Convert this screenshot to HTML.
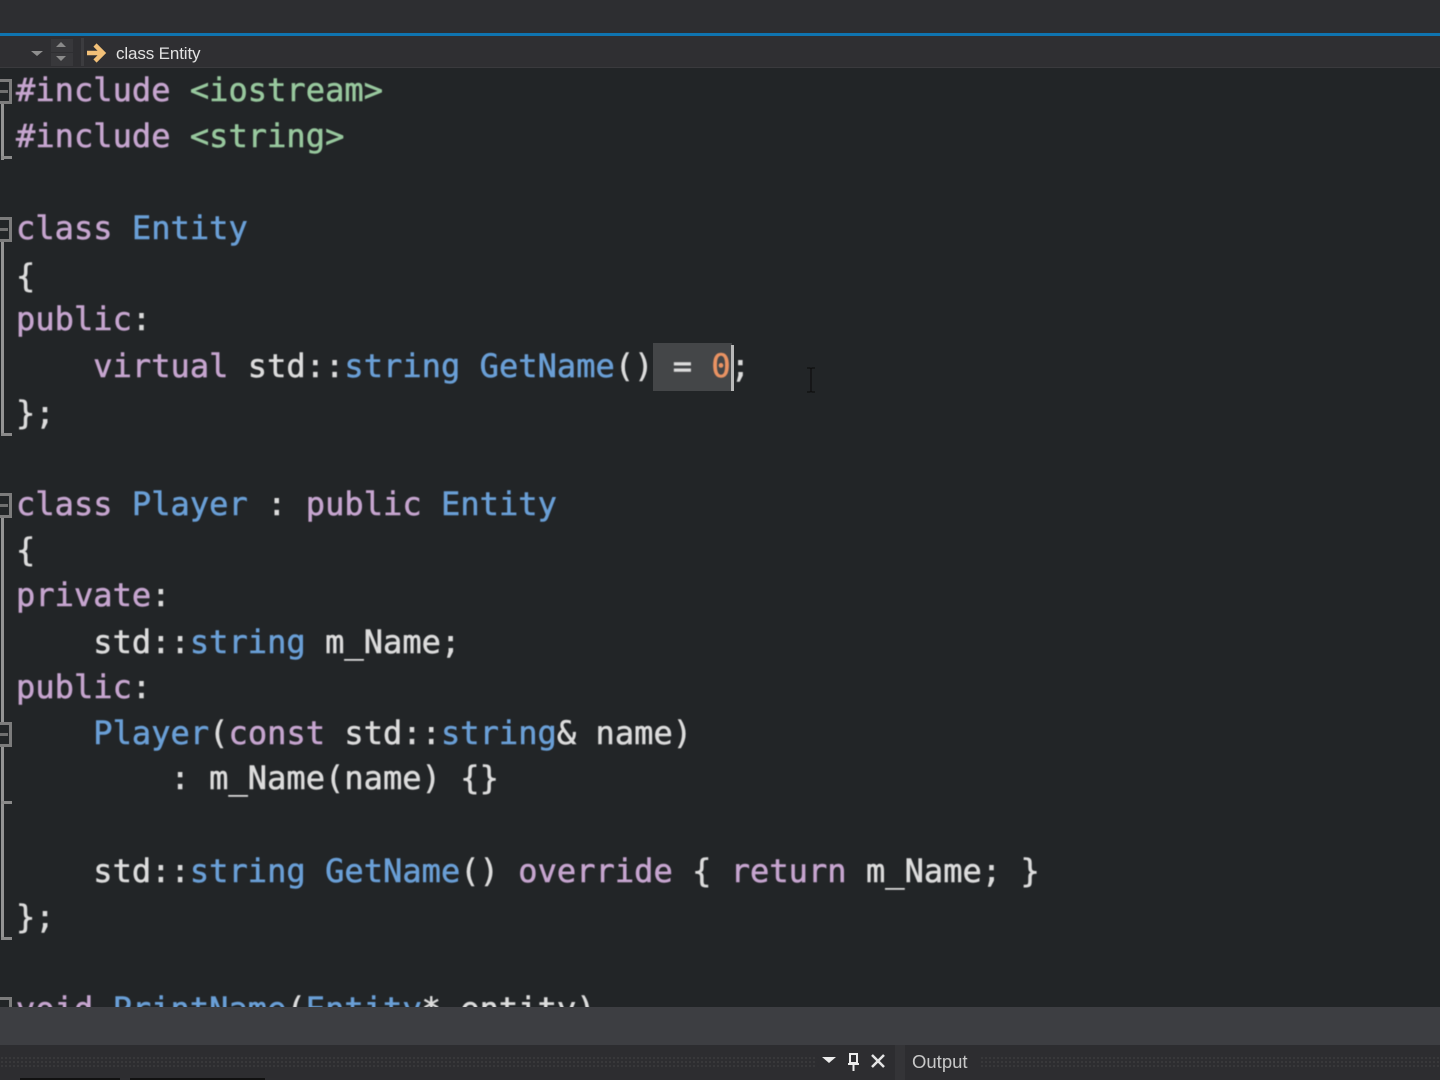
<!DOCTYPE html>
<html>
<head>
<meta charset="utf-8">
<style>
html,body{margin:0;padding:0;background:#222527;}
body{width:1440px;height:1080px;position:relative;overflow:hidden;}
.a{position:absolute;}
.code{position:absolute;left:0;top:68px;width:1440px;height:939px;overflow:hidden;background:#222527;}
.l{position:absolute;left:16px;white-space:pre;font-family:"DejaVu Sans Mono",monospace;font-size:32px;line-height:46px;height:46px;letter-spacing:.05px;color:#dcdcdc;-webkit-text-stroke:.55px currentColor;filter:blur(.45px);}
.k{color:#c6a5cf;}
.t{color:#6a9fd6;}
.g{color:#98c89e;}
.n{color:#ea9363;}
.box{position:absolute;left:-13px;width:25px;height:25px;border:3px solid #7c7c7c;box-sizing:border-box;background:#222527;}
.box:after{content:"";position:absolute;left:9px;top:8px;width:9px;height:3px;background:#6f6f6f;}
.v{position:absolute;left:1px;width:3px;background:#949494;}
.h{position:absolute;left:1px;width:11px;height:3px;background:#8a8a8a;}
</style>
</head>
<body>
<div class="a" style="left:0;top:0;width:1440px;height:33px;background:#2d2e31;"></div>
<div class="a" style="left:0;top:33px;width:1440px;height:3px;background:#0f74b0;"></div>
<div class="a" style="left:0;top:36px;width:1440px;height:32px;background:#2f2f32;border-bottom:1px solid #3a3a3d;box-sizing:border-box;"></div>
<div class="a" style="left:51px;top:39px;width:22px;height:13px;background:#38383b;"></div>
<div class="a" style="left:51px;top:53px;width:22px;height:13px;background:#38383b;"></div>
<div class="a" style="left:81px;top:38px;width:3px;height:28px;background:#3c3c3f;"></div>
<svg class="a" style="left:0;top:36px;" width="120" height="32">
<path d="M31 15h12l-6 5z" fill="#8f8f8f"/>
<path d="M56 11h10l-5-5z" fill="#8a8a8a"/>
<path d="M56 20h10l-5 5z" fill="#8a8a8a"/>
<path d="M87 17h14M95 9l8 8-8 8" fill="none" stroke="#f2c078" stroke-width="4.500"/>
</svg>
<div class="a" style="left:116px;top:43px;font:17px/22px 'Liberation Sans',sans-serif;color:#e2e2e2;white-space:pre;letter-spacing:-.13px;filter:blur(.25px);">class Entity</div>

<div class="code">
<div class="v" style="top:34px;height:58px;"></div><div class="h" style="top:88px;"></div>
<div class="v" style="top:172px;height:196px;"></div><div class="h" style="top:365px;"></div>
<div class="v" style="top:448px;height:424px;"></div><div class="h" style="top:869px;"></div>
<div class="h" style="top:733px;"></div>
<div class="box" style="top:11px;"></div>
<div class="box" style="top:149px;"></div>
<div class="box" style="top:425px;"></div>
<div class="box" style="top:654px;"></div>
<div class="box" style="top:929px;"></div>
<div class="a" style="left:653px;top:275px;width:79px;height:48px;background:#444648;"></div>
<div class="a" style="left:731px;top:277px;width:3px;height:46px;background:#b8b8b8;z-index:3;"></div>

<div class="l" style="top:-1px;"><span class="k">#include</span> <span class="g">&lt;iostream&gt;</span></div>
<div class="l" style="top:45px;"><span class="k">#include</span> <span class="g">&lt;string&gt;</span></div>
<div class="l" style="top:137px;"><span class="k">class</span> <span class="t">Entity</span></div>
<div class="l" style="top:185px;">{</div>
<div class="l" style="top:228px;"><span class="k">public</span>:</div>
<div class="l" style="top:275px;">    <span class="k">virtual</span> std::<span class="t">string</span> <span class="t">GetName</span>() = <span class="n">0</span>;</div>
<div class="l" style="top:322px;">};</div>
<div class="l" style="top:413px;"><span class="k">class</span> <span class="t">Player</span> : <span class="k">public</span> <span class="t">Entity</span></div>
<div class="l" style="top:459px;">{</div>
<div class="l" style="top:504px;"><span class="k">private</span>:</div>
<div class="l" style="top:551px;">    std::<span class="t">string</span> m_Name;</div>
<div class="l" style="top:596px;"><span class="k">public</span>:</div>
<div class="l" style="top:642px;">    <span class="t">Player</span>(<span class="k">const</span> std::<span class="t">string</span>&amp; name)</div>
<div class="l" style="top:687px;">        : m_Name(name) {}</div>
<div class="l" style="top:780px;">    std::<span class="t">string</span> <span class="t">GetName</span>() <span class="k">override</span> { <span class="k">return</span> m_Name; }</div>
<div class="l" style="top:826px;">};</div>
<div class="l" style="top:918px;"><span class="k">void</span> <span class="t">PrintName</span>(<span class="t">Entity</span>* entity)</div>
</div>

<svg class="a" style="left:803px;top:366px;" width="16" height="28">
<path d="M4 2h3l1 1 1-1h3M8 3v22M4 26h3l1-1 1 1h3" fill="none" stroke="#101010" stroke-width="1.3"/>
</svg>

<div class="a" style="left:0;top:1007px;width:1440px;height:38px;background:#3d3e42;"></div>
<div class="a" style="left:0;top:1045px;width:1440px;height:35px;background:#2d2d30;"></div>
<div class="a" style="left:0;top:1056px;width:815px;height:12px;background-image:radial-gradient(#3b3b3e 1px,transparent 1px);background-size:4px 4px;"></div>
<div class="a" style="left:980px;top:1056px;width:460px;height:12px;background-image:radial-gradient(#3b3b3e 1px,transparent 1px);background-size:4px 4px;"></div>
<div class="a" style="left:895px;top:1045px;width:10px;height:35px;background:#343437;"></div>
<div class="a" style="left:20px;top:1078px;width:100px;height:2px;background:#111;"></div>
<div class="a" style="left:130px;top:1078px;width:135px;height:2px;background:#111;"></div>
<svg class="a" style="left:815px;top:1048px;" width="80" height="28">
<path d="M7 9h14l-7 6z" fill="#ececec"/>
<path d="M34 6h9M35 6v9h7V6M33 16h11M38.500 16v7" fill="none" stroke="#ececec" stroke-width="2"/>
<path d="M57 7l12 12M69 7L57 19" fill="none" stroke="#e4e4e4" stroke-width="2.500"/>
</svg>
<div class="a" style="left:912px;top:1050px;font:18.500px/24px 'Liberation Sans',sans-serif;color:#c8c8c8;filter:blur(.25px);">Output</div>
</body>
</html>
